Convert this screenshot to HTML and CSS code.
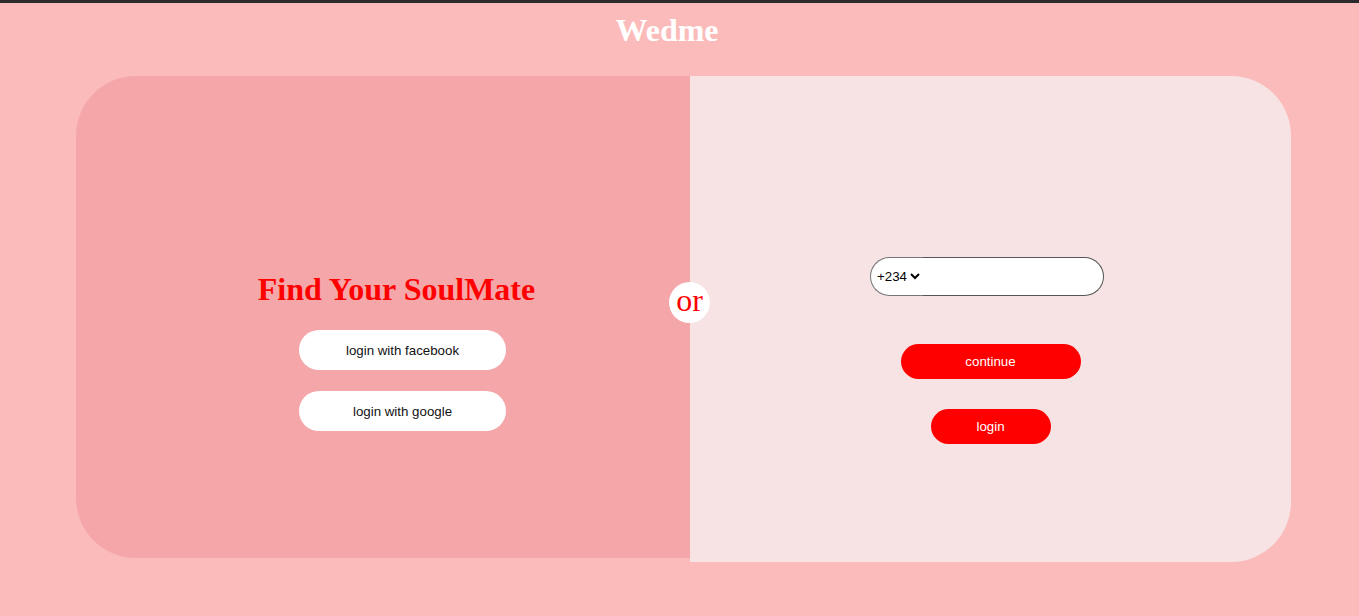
FILE: index.html
```html
<!DOCTYPE html>
<html>
<head>
<meta charset="utf-8">
<title>Wedme</title>
<link rel="stylesheet" href="styles.css">
</head>
<body>
<div class="topbar"></div>
<header class="brand">Wedme</header>
<main class="card">
  <section class="left">
    <div class="left-inner">
      <h2 class="tagline">Find Your SoulMate</h2>
      <button class="social">login with facebook</button>
      <button class="social">login with google</button>
    </div>
  </section>
  <section class="right">
    <div class="phone">
      <select class="code"><option>+234</option></select>
      <input class="number" type="tel">
    </div>
    <button class="red continue">continue</button>
    <button class="red login">login</button>
  </section>
  <div class="or">or</div>
</main>
</body>
</html>
```
FILE: styles.css
```css
* { box-sizing: border-box; }
html, body { margin: 0; padding: 0; }
body {
  background: #fbbbbb;
  font-family: "Liberation Serif", serif;
  height: 616px;
  overflow: hidden;
}
.topbar { height: 3px; background: #2c2a2b; }
.brand {
  text-align: center;
  color: #fff;
  font-weight: bold;
  font-size: 32px;
  line-height: 37px;
  margin-top: 9px;
  padding-right: 25px;
}
.card {
  position: relative;
  display: flex;
  align-items: flex-start;
  margin: 27px 0 0 76px;
  width: 1215px;
}
.left {
  width: 614px;
  height: 482px;
  background: #f5a6a8;
  border-radius: 60px 0 0 60px;
}
.left-inner {
  display: flex;
  flex-direction: column;
  align-items: center;
  padding: 195px 0 0 27px;
}
.tagline {
  margin: 0;
  color: #ff0000;
  font-size: 32px;
  font-weight: bold;
  line-height: 37px;
  font-family: "Liberation Serif", serif;
}
.social {
  margin: 21px 0 0 12px;
  width: 207px;
  height: 40px;
  border: none;
  border-radius: 20px;
  background: #fff;
  color: #111;
  font-family: "Liberation Sans", Arial, sans-serif;
  font-size: 13.3px;
}
.social:first-of-type { margin-top: 22px; }
.right {
  width: 601px;
  height: 486px;
  background: #f7e3e4;
  border-radius: 0 60px 60px 0;
  display: flex;
  flex-direction: column;
  align-items: center;
  padding-top: 181px;
}
.phone {
  display: flex;
  width: 234px;
  height: 39px;
  margin-right: 7px;
}
.code {
  height: 39px;
  border: 1px solid #767676;
  border-right: none;
  border-radius: 20px 0 0 20px;
  background: #fff;
  font-family: "Liberation Sans", Arial, sans-serif;
  font-size: 13.3px;
  color: #000;
  padding: 0 0 0 2px;
}
.number {
  flex: 1;
  min-width: 0;
  height: 39px;
  border: 1px solid #555;
  border-left: none;
  border-radius: 0 20px 20px 0;
  background: #fff;
  outline: none;
}
.red {
  border: none;
  background: #ff0000;
  color: #fff;
  height: 35px;
  border-radius: 18px;
  font-family: "Liberation Sans", Arial, sans-serif;
  font-size: 13.3px;
}
.continue { width: 180px; margin-top: 48px; }
.login { width: 120px; margin-top: 30px; }
.or {
  position: absolute;
  left: 593px;
  top: 206px;
  width: 41px;
  height: 41px;
  border-radius: 50%;
  background: #fff;
  color: #ff0000;
  font-size: 32px;
  line-height: 37px;
  text-align: center;
  font-family: "Liberation Serif", serif;
}
```
